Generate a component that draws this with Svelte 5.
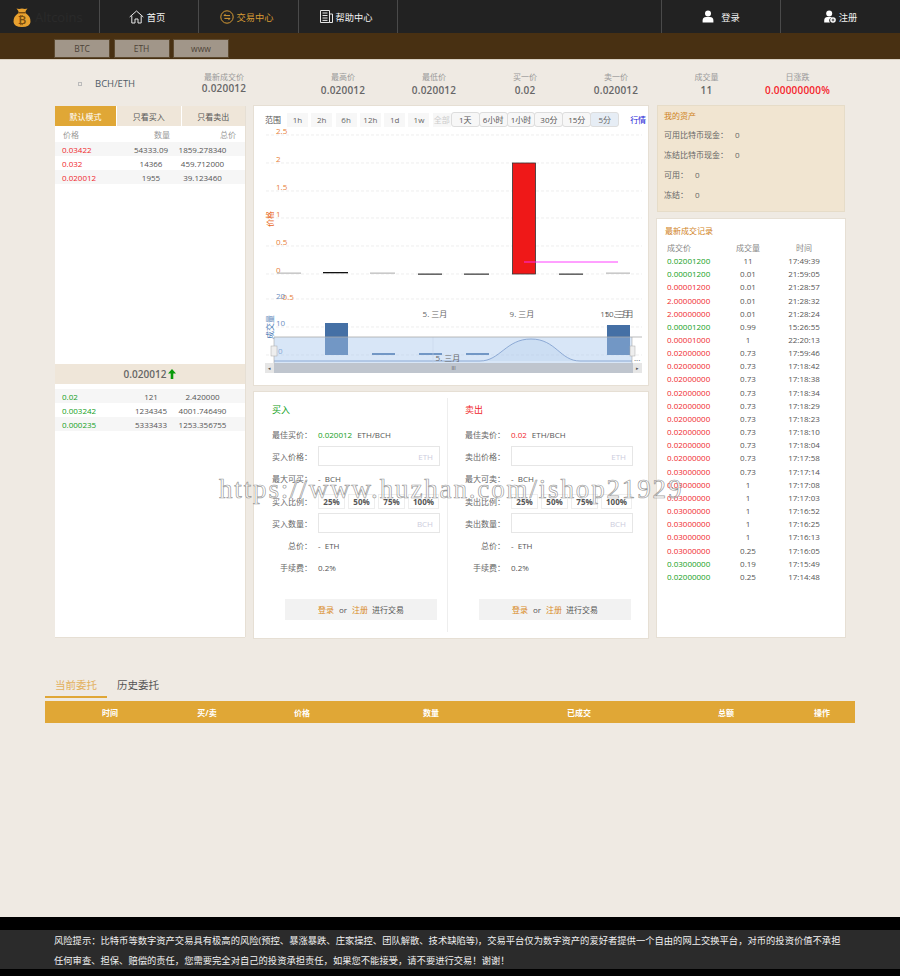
<script lang="ts">
  const nav = [
    { label: '首页', icon: 'home', active: false },
    { label: '交易中心', icon: 'swap', active: true },
    { label: '帮助中心', icon: 'doc', active: false }
  ];
  const stats = [
    { label: '最高价', value: '0.020012', w: 91 },
    { label: '最低价', value: '0.020012', w: 91 },
    { label: '买一价', value: '0.02', w: 91 },
    { label: '卖一价', value: '0.020012', w: 91 },
    { label: '成交量', value: '11', w: 90 }
  ];
  const asks = [
    ['0.03422', '54333.09', '1859.278340'],
    ['0.032', '14366', '459.712000'],
    ['0.020012', '1955', '39.123460']
  ];
  const bids = [
    ['0.02', '121', '2.420000'],
    ['0.003242', '1234345', '4001.746490'],
    ['0.000235', '5333433', '1253.356755']
  ];
  const trades = [
    ['0.02001200', '11', '17:49:39', 'g'],
    ['0.00001200', '0.01', '21:59:05', 'g'],
    ['0.00001200', '0.01', '21:28:57', 'r'],
    ['2.00000000', '0.01', '21:28:32', 'r'],
    ['2.00000000', '0.01', '21:28:24', 'r'],
    ['0.00001200', '0.99', '15:26:55', 'g'],
    ['0.00001000', '1', '22:20:13', 'r'],
    ['0.02000000', '0.73', '17:59:46', 'r'],
    ['0.02000000', '0.73', '17:18:42', 'r'],
    ['0.02000000', '0.73', '17:18:38', 'r'],
    ['0.02000000', '0.73', '17:18:34', 'r'],
    ['0.02000000', '0.73', '17:18:29', 'r'],
    ['0.02000000', '0.73', '17:18:23', 'r'],
    ['0.02000000', '0.73', '17:18:10', 'r'],
    ['0.02000000', '0.73', '17:18:04', 'r'],
    ['0.02000000', '0.73', '17:17:58', 'r'],
    ['0.03000000', '0.73', '17:17:14', 'r'],
    ['0.03000000', '1', '17:17:08', 'r'],
    ['0.03000000', '1', '17:17:03', 'r'],
    ['0.03000000', '1', '17:16:52', 'r'],
    ['0.03000000', '1', '17:16:25', 'r'],
    ['0.03000000', '1', '17:16:13', 'r'],
    ['0.03000000', '0.25', '17:16:05', 'r'],
    ['0.03000000', '0.19', '17:15:49', 'g'],
    ['0.02000000', '0.25', '17:14:48', 'g']
  ];
  const ranges = ['1h', '2h', '6h', '12h', '1d', '1w'];
  const periods = ['1天', '6小时', '1小时', '30分', '15分', '5分'];
  const grid = [29, 57, 85, 112, 140, 168, 193, 221, 249];
  const yTicks = [
    { t: '2.5', x: 22, y: 28 },
    { t: '2', x: 22, y: 56 },
    { t: '1.5', x: 22, y: 84 },
    { t: '1', x: 22, y: 111 },
    { t: '0.5', x: 22, y: 139 },
    { t: '0', x: 22, y: 167 },
    { t: '-0.5', x: 26, y: 194 }
  ];
  const minis = [
    { x: 23, w: 24, y: 166.5, c: '#bdbdbd' },
    { x: 69, w: 25, y: 166, c: '#111' },
    { x: 116, w: 25, y: 166.5, c: '#bdbdbd' },
    { x: 164, w: 24, y: 167.5, c: '#444' },
    { x: 210, w: 25, y: 167.5, c: '#444' },
    { x: 305, w: 24, y: 167.5, c: '#444' },
    { x: 352, w: 24, y: 166.5, c: '#bdbdbd' }
  ];
  const volumes = [
    { x: 71, y: 217 },
    { x: 118, y: 247 },
    { x: 165, y: 247 },
    { x: 212, y: 247 },
    { x: 353, y: 219 }
  ];
  const forms = [
    { title: '买入', tone: 'g', best: '最佳买价', bestVal: '0.020012', price: '买入价格', max: '最大可买', ratio: '买入比例', qty: '买入数量' },
    { title: '卖出', tone: 'r', best: '最佳卖价', bestVal: '0.02', price: '卖出价格', max: '最大可卖', ratio: '卖出比例', qty: '卖出数量' }
  ];
  const heads = [
    { t: '时间', w: 130 },
    { t: '买/卖', w: 64 },
    { t: '价格', w: 126 },
    { t: '数量', w: 132 },
    { t: '已成交', w: 164 },
    { t: '总额', w: 130 },
    { t: '操作', w: 62 }
  ];
</script>

<div class="page">
  <header class="top">
    <div class="logo">
      <svg width="22" height="22" viewBox="0 0 22 22">
        <path d="M7 3.5 L5.5 1.5 Q8 2.4 11 1.5 Q14 2.4 16.5 1.5 L15 3.5 Q14 5 14.5 6 Q20 9.5 19.5 15 Q19 20 11 20 Q3 20 2.5 15 Q2 9.5 7.5 6 Q8 5 7 3.5 Z" fill="#e8a12f" />
        <rect x="7.5" y="5" width="7" height="1.4" fill="#7a4d10" />
        <text x="11" y="16.5" text-anchor="middle" class="logo-b">₿</text>
      </svg>
      <span>Altcoins</span>
    </div>
    {#each nav as n}
      <a class="nav" class:active={n.active} href="#top">
        {#if n.icon === 'home'}
          <svg width="15" height="14" viewBox="0 0 15 14" fill="none" stroke="#e6e6e6" stroke-width="1">
            <path d="M0.7 7 L7.5 1 L14.3 7 M2.8 5.6 V13 H6 V9 H9 V13 H12.2 V5.6" />
          </svg>
        {:else if n.icon === 'swap'}
          <svg width="14" height="14" viewBox="0 0 14 14" fill="none" stroke="#d69a34" stroke-width="1">
            <circle cx="7" cy="7" r="6.2" />
            <path d="M4 5.6 H10 M5.6 3.9 L4 5.6 M10 8.4 H4.4 M8.4 10.1 L10 8.4" />
          </svg>
        {:else}
          <svg width="13" height="13" viewBox="0 0 13 13" fill="none" stroke="#e6e6e6" stroke-width="1">
            <path d="M0.5 0.5 H9.5 V12.5 H0.5 Z M9.5 4 H12.5 V12.5 H9.5 M2.5 3 H7.5 M2.5 5.5 H7.5 M2.5 8 H7.5 M2.5 10.4 H7.5" />
          </svg>
        {/if}
        <span>{n.label}</span>
      </a>
    {/each}
    <div class="top-gap"></div>
    <a class="nav auth" href="#top">
      <svg width="12" height="13" viewBox="0 0 12 13" fill="#fff">
        <circle cx="6" cy="3.4" r="3" />
        <path d="M0.6 12.6 V10.4 Q0.6 7.4 4 7 H8 Q11.4 7.4 11.4 10.4 V12.6 Z" />
      </svg>
      <span>登录</span>
    </a>
    <a class="nav auth last" href="#top">
      <svg width="12" height="13" viewBox="0 0 12 13" fill="#fff">
        <circle cx="5.2" cy="3.4" r="3" />
        <path d="M0.2 12.6 V10.4 Q0.2 7.4 3.4 7 H7 Q7.8 7.1 8.4 7.5 A3 3 0 0 0 6 12.6 Z" />
        <circle cx="9" cy="10" r="2.8" />
        <path d="M7.6 10 H10.4 M9 8.6 V11.4" stroke="#222" stroke-width="0.8" />
      </svg>
      <span>注册</span>
    </a>
  </header>

  <div class="market-bar">
    <button>BTC</button>
    <button>ETH</button>
    <button>www</button>
  </div>

  <section class="ticker">
    <div class="pair"><i></i><span>BCH/ETH</span></div>
    <div class="stat first">
      <small>最新成交价</small>
      <b>0.020012</b>
    </div>
    {#each stats as s}
      <div class="stat" style="width: {s.w}px">
        <small>{s.label}</small>
        <b>{s.value}</b>
      </div>
    {/each}
    <div class="stat change">
      <small>日涨跌</small>
      <b>0.00000000%</b>
    </div>
  </section>

  <main class="board">
    <aside class="book card">
      <div class="book-tabs">
        <span class="on">默认模式</span>
        <span>只看买入</span>
        <span>只看卖出</span>
      </div>
      <div class="book-head book-row">
        <span>价格</span><span>数量</span><span>总价</span>
      </div>
      <div class="book-list">
        {#each asks as r}
          <div class="book-row data">
            <span class="r">{r[0]}</span><span>{r[1]}</span><span>{r[2]}</span>
          </div>
        {/each}
      </div>
      <div class="last-price">
        <b>0.020012</b>
        <svg width="8" height="10" viewBox="0 0 8 10"><path d="M4 0 L8 4.4 H5.3 V10 H2.7 V4.4 H0 Z" fill="#0a9a0a" /></svg>
      </div>
      <div class="book-list bids">
        {#each bids as r}
          <div class="book-row data">
            <span class="g">{r[0]}</span><span>{r[1]}</span><span>{r[2]}</span>
          </div>
        {/each}
      </div>
    </aside>

    <div class="middle">
      <section class="chart card">
        <div class="chart-bar">
          <span class="range-label">范围</span>
          {#each ranges as r}
            <span class="range">{r}</span>
          {/each}
          <span class="range off">全部</span>
          <div class="periods">
            {#each periods as p, i}
              <span class="period" class:sel={i === periods.length - 1}>{p}</span>
            {/each}
          </div>
          <span class="quote">行情</span>
        </div>
        <svg class="plot" width="394" height="236" viewBox="0 21 394 236">
          {#each grid as y}
            <line x1="12" x2="388" y1={y} y2={y} class="grid" />
          {/each}
          {#each yTicks as t}
            <text x={t.x} y={t.y} class="ytick">{t.t}</text>
          {/each}
          <text transform="translate(19 113) rotate(-90)" text-anchor="middle" class="yname">价格</text>

          {#each minis as m}
            <rect x={m.x} y={m.y} width={m.w} height="1.3" fill={m.c} />
          {/each}
          <rect x="258.5" y="57" width="23" height="111" fill="#ef1818" stroke="#333" stroke-width="0.8" />
          <line x1="270" x2="364" y1="156" y2="156" stroke="#ff2bff" stroke-width="0.9" />

          <text x="22" y="193" class="vtick">20</text>
          <text x="22" y="220" class="vtick">10</text>
          <text x="24" y="248" class="vtick">0</text>
          <text transform="translate(19 221) rotate(-90)" text-anchor="middle" class="vname">成交量</text>
          <text x="181" y="211" text-anchor="middle" class="xtick">5. 三月</text>
          <text x="268" y="211" text-anchor="middle" class="xtick">9. 三月</text>
          <text x="361" y="211" text-anchor="middle" class="xtick">15. 三月</text>
          <text x="365" y="211" text-anchor="middle" class="xtick">10. 三月</text>

          {#each volumes as v}
            <rect x={v.x} y={v.y} width="23" height={249 - v.y} fill="#4570a5" />
          {/each}

          <rect x="20" y="231" width="358" height="26" fill="#a9c8ee" fill-opacity="0.45" />
          <path d="M20 255 H226 C246 255 252 233 277 233 C302 233 306 255 326 255 H378" fill="#9fc0e8" fill-opacity="0.2" stroke="#7a9bcb" stroke-width="0.8" />
          <line x1="179" x2="179" y1="231" y2="257" stroke="#c5d3e4" stroke-width="0.5" />
          <line x1="20" x2="388" y1="231" y2="231" stroke="#aaa" stroke-width="0.8" />
          <line x1="20" x2="20" y1="231" y2="257" stroke="#aaa" stroke-width="0.6" />
          <line x1="378" x2="378" y1="231" y2="257" stroke="#aaa" stroke-width="0.6" />
          <rect x="17" y="240" width="6" height="10" fill="#eee" stroke="#aaa" stroke-width="0.5" />
          <rect x="376" y="240" width="5" height="10" fill="#eee" stroke="#aaa" stroke-width="0.5" />
          <text x="194" y="255" text-anchor="middle" class="xtick">5. 三月</text>
          <text x="380" y="255" class="xtick">...</text>
        </svg>
        <div class="scroller">
          <span class="sc-btn">◂</span>
          <span class="sc-thumb">III</span>
          <span class="sc-btn">▸</span>
        </div>
      </section>

      <section class="trade card">
        {#each forms as f, i}
          <div class="form" class:second={i === 1}>
            <h3 class={f.tone}>{f.title}</h3>
            <div class="f-row">
              <label>{f.best}：</label>
              <span class="val"><em class={f.tone}>{f.bestVal}</em>ETH/BCH</span>
            </div>
            <div class="f-row">
              <label>{f.price}：</label>
              <div class="input">ETH</div>
            </div>
            <div class="f-row">
              <label>{f.max}：</label>
              <span class="val">-&nbsp; BCH</span>
            </div>
            <div class="f-row">
              <label>{f.ratio}：</label>
              <div class="ratios">
                <span>25%</span><span>50%</span><span>75%</span><span class="wide">100%</span>
              </div>
            </div>
            <div class="f-row">
              <label>{f.qty}：</label>
              <div class="input">BCH</div>
            </div>
            <div class="f-row">
              <label>总价：</label>
              <span class="val">-&nbsp; ETH</span>
            </div>
            <div class="f-row">
              <label>手续费：</label>
              <span class="val">0.2%</span>
            </div>
            <div class="login-box">
              <a href="#top">登录</a><i>or</i><a href="#top">注册</a><span>进行交易</span>
            </div>
          </div>
        {/each}
      </section>
    </div>

    <aside class="side">
      <section class="assets">
        <h4>我的资产</h4>
        <p>可用比特币现金： <span>0</span></p>
        <p>冻结比特币现金： <span>0</span></p>
        <p>可用： <span>0</span></p>
        <p>冻结： <span>0</span></p>
      </section>
      <section class="deals card">
        <h4>最新成交记录</h4>
        <div class="deal-row head">
          <span>成交价</span><span>成交量</span><span>时间</span>
        </div>
        {#each trades as t}
          <div class="deal-row">
            <span class={t[3]}>{t[0]}</span><span>{t[1]}</span><span>{t[2]}</span>
          </div>
        {/each}
      </section>
    </aside>
  </main>

  <section class="orders">
    <div class="order-tabs">
      <span class="on">当前委托</span>
      <span>历史委托</span>
    </div>
    <div class="order-head">
      {#each heads as h}
        <span style="width: {h.w}px">{h.t}</span>
      {/each}
    </div>
  </section>

  <footer class="foot">
    <p>风险提示：比特币等数字资产交易具有极高的风险(预控、暴涨暴跌、庄家操控、团队解散、技术缺陷等)，交易平台仅为数字资产的爱好者提供一个自由的网上交换平台，对币的投资价值不承担任何审查、担保、赔偿的责任，您需要完全对自己的投资承担责任，如果您不能接受，请不要进行交易！谢谢！</p>
  </footer>

  <div class="watermark">https://www.huzhan.com/ishop21929</div>
</div>

<style>
  :global(body) {
    margin: 0;
    background: #efeae3;
  }
  .page {
    position: relative;
    width: 900px;
    height: 976px;
    display: flex;
    flex-direction: column;
    overflow: hidden;
    background: #efeae3;
    color: #555;
    font-family: 'Open Sans', 'Noto Sans CJK SC', sans-serif;
    font-size: 8px;
  }
  a {
    color: inherit;
    text-decoration: none;
  }
  .card {
    background: #fff;
    box-shadow: 0 0 0 1px #e6dfd4;
  }
  .r { color: #f0282d; }
  .g { color: #12a022; }

  /* шапка */
  .top {
    display: flex;
    height: 33px;
    background: #222;
  }
  .logo {
    width: 99px;
    padding: 7px 0 0 11px;
    box-sizing: border-box;
    display: flex;
    gap: 2px;
    color: #2a2a2a;
    font-size: 13px;
    line-height: 20px;
  }
  .logo-b {
    font-size: 10px;
    font-weight: 700;
    fill: #7a4d10;
  }
  .nav {
    width: 99px;
    display: flex;
    align-items: center;
    justify-content: center;
    gap: 3px;
    border-left: 1px solid #4a4a4a;
    box-sizing: border-box;
    color: #f2f2f2;
    font-size: 9.25px;
    padding-right: 4px;
  }
  .nav.active {
    width: 100px;
    color: #d69a34;
  }
  .top-gap {
    flex: 1;
    border-left: 1px solid #4a4a4a;
  }
  .nav.auth {
    width: 119px;
    gap: 7px;
    padding-right: 0;
  }
  .nav.auth.last {
    width: 120px;
    gap: 3px;
  }
  .market-bar {
    height: 27px;
    background: #483012;
    display: flex;
    gap: 3.5px;
    padding: 6px 0 0 54px;
    box-sizing: border-box;
    border-bottom: 1px solid #d9d0c1;
  }
  .market-bar button {
    width: 56px;
    height: 19px;
    padding: 0;
    background: #a19689;
    border: 1px solid #5d4a30;
    color: #4d4338;
    font: inherit;
    font-size: 8.5px;
  }

  /* строка котировок */
  .ticker {
    height: 45px;
    display: flex;
    align-items: flex-start;
    padding-left: 78px;
    box-sizing: border-box;
  }
  .pair {
    width: 103px;
    display: flex;
    align-items: center;
    gap: 13px;
    padding-top: 17px;
    color: #4f5b66;
    font-size: 9.5px;
  }
  .pair i {
    width: 2px;
    height: 2px;
    border: 1px solid #bbb;
  }
  .stat {
    display: flex;
    flex-direction: column;
    align-items: center;
    gap: 1px;
    padding-top: 11px;
  }
  .stat small {
    font-size: 8px;
    line-height: 11px;
    color: #999;
  }
  .stat b {
    font-size: 10px;
    line-height: 14px;
    font-weight: 600;
    color: #666;
    letter-spacing: 0.2px;
  }
  .stat.first {
    width: 86px;
    margin-right: 30.5px;
  }
  .stat.first b {
    margin-top: -2px;
  }
  .stat.change {
    width: 90px;
    margin-left: 1px;
  }
  .stat.change b {
    color: #f5242b;
  }

  /* основная сетка */
  .board {
    display: flex;
    align-items: flex-start;
    height: 534px;
    padding-left: 55px;
    gap: 9px;
  }

  /* стакан */
  .book {
    width: 190px;
    height: 531px;
    margin-top: 1px;
    display: flex;
    flex-direction: column;
    box-shadow: 1px 0 0 #e6dfd4, 0 1px 0 #e6dfd4;
  }
  .book-tabs {
    display: flex;
    gap: 1px;
    height: 20px;
    flex: none;
  }
  .book-tabs span {
    flex: 1;
    display: flex;
    align-items: center;
    justify-content: center;
    background: #efe6d9;
    color: #555;
  }
  .book-tabs span.on {
    flex: 0 0 61px;
    background: #e0a736;
    color: #fff;
  }
  .book-row {
    display: grid;
    grid-template-columns: 62px 54px 1fr;
    padding: 0 7px;
    height: 14px;
    align-items: center;
  }
  .book-row span:nth-child(2) {
    text-align: center;
  }
  .book-row span:nth-child(3) {
    text-align: center;
    padding-right: 11px;
  }
  .book-head {
    height: 16px;
    color: #999;
    flex: none;
  }
  .book-head span:first-child {
    padding-left: 1px;
  }
  .book-head span:nth-child(2) {
    text-align: right;
    padding-right: 8px;
  }
  .book-head span:nth-child(3) {
    text-align: right;
    padding-right: 2px;
  }
  .book-list {
    height: 222px;
    flex: none;
    box-sizing: border-box;
  }
  .book-list.bids {
    padding-top: 5px;
    height: auto;
  }
  .data:nth-child(odd) {
    background: #f6f6f6;
  }
  .last-price {
    height: 20px;
    flex: none;
    display: flex;
    align-items: center;
    justify-content: center;
    gap: 2px;
    background: #efe6d9;
  }
  .last-price b {
    font-size: 10px;
    font-weight: 600;
    color: #666;
  }

  /* график */
  .middle {
    width: 394px;
    display: flex;
    flex-direction: column;
    gap: 7px;
    margin-top: 1px;
  }
  .chart {
    height: 279px;
    box-sizing: border-box;
    padding-top: 6px;
  }
  .chart-bar {
    display: flex;
    align-items: center;
    height: 15px;
    margin-left: 11px;
    white-space: nowrap;
  }
  .range-label {
    width: 22px;
    color: #555;
  }
  .range {
    width: 21px;
    height: 14px;
    margin-right: 3.3px;
    display: flex;
    align-items: center;
    justify-content: center;
    background: #f7f7f7;
    color: #666;
  }
  .range.off {
    width: 18px;
    margin-right: 0;
    color: #ccc;
  }
  .periods {
    display: flex;
  }
  .period {
    width: 26.9px;
    height: 13px;
    display: flex;
    align-items: center;
    justify-content: center;
    background: #f7f7f7;
    border: 1px solid #ddd;
    border-radius: 3px;
    color: #555;
    margin-right: -1px;
  }
  .period.sel {
    background: #e6edf5;
    color: #666;
  }
  .quote {
    margin-left: 12px;
    color: #1a1ad6;
  }
  .plot {
    display: block;
    overflow: visible;
  }
  .grid {
    stroke: #e6e6e6;
    stroke-width: 0.7;
    stroke-dasharray: 3 2;
  }
  .ytick {
    font-size: 8px;
    fill: #e8803a;
  }
  .vtick {
    font-size: 8px;
    fill: #6d8fbf;
  }
  .yname {
    font-size: 8px;
    fill: #e8661a;
  }
  .vname {
    font-size: 8px;
    fill: #4f7eb8;
  }
  .xtick {
    font-size: 8px;
    fill: #666;
  }
  .scroller {
    margin: 0 6px 0 11px;
    height: 10px;
    display: flex;
    background: #bfc5ce;
    font-size: 5px;
    color: #555;
  }
  .sc-btn {
    width: 9px;
    display: flex;
    align-items: center;
    justify-content: center;
    background: #e6e6e6;
  }
  .sc-thumb {
    flex: 1;
    display: flex;
    align-items: center;
    justify-content: center;
  }

  /* формы покупки и продажи */
  .trade {
    height: 246px;
    display: flex;
    padding: 6px 0;
    box-sizing: border-box;
  }
  .form {
    width: 193px;
    box-sizing: border-box;
    padding-left: 18px;
    position: relative;
  }
  .form.second {
    width: 201px;
    border-left: 1px solid #eee;
    padding-left: 17px;
  }
  .form h3 {
    margin: 0;
    padding-top: 5px;
    height: 25px;
    box-sizing: border-box;
    line-height: 14px;
    font-size: 9px;
    font-weight: 400;
  }
  .f-row {
    display: flex;
    align-items: center;
    height: 22.3px;
    color: #555;
  }
  .f-row label {
    width: 46px;
    flex: none;
    box-sizing: border-box;
    padding-right: 6px;
    text-align: right;
    white-space: nowrap;
    color: #666;
  }
  .val {
    color: #555;
  }
  .val em {
    font-style: normal;
    margin-right: 5px;
  }
  .input {
    width: 122px;
    height: 20px;
    box-sizing: border-box;
    border: 1px solid #e6e6e6;
    display: flex;
    align-items: center;
    justify-content: flex-end;
    padding-right: 6px;
    color: #ccd;
  }
  .ratios {
    display: flex;
    gap: 3px;
  }
  .ratios span {
    width: 27px;
    height: 15px;
    display: flex;
    align-items: center;
    justify-content: center;
    box-sizing: border-box;
    border: 1px solid #eee;
    font-weight: 700;
  }
  .ratios span.wide {
    width: 31px;
  }
  .login-box {
    position: absolute;
    left: 31px;
    width: 152px;
    top: 201px;
    height: 21px;
    background: #f2f2f2;
    display: flex;
    align-items: center;
    justify-content: center;
    gap: 4px;
  }
  .login-box a {
    color: #d98a1f;
  }
  .login-box i {
    font-style: normal;
    margin: 0 1px;
  }

  /* правая колонка */
  .side {
    width: 188px;
    display: flex;
    flex-direction: column;
    gap: 7px;
  }
  .assets {
    height: 107px;
    box-sizing: border-box;
    padding: 4px 6px;
    background: #f1e5d1;
    border: 1px solid #e6dcc8;
  }
  .assets h4,
  .deals h4 {
    margin: 0;
    font-size: 8px;
    line-height: 11px;
    font-weight: 400;
    color: #d0821c;
  }
  .assets p {
    margin: 0;
    height: 20px;
    line-height: 20px;
    color: #666;
  }
  .assets h4 {
    margin-bottom: 4px;
  }
  .assets p span {
    margin-left: 5px;
  }
  .deals {
    height: 418px;
    padding: 6px 8px 0;
    box-sizing: border-box;
  }
  .deals h4 {
    margin-bottom: 4px;
  }
  .deal-row {
    display: grid;
    grid-template-columns: 1fr 56px 56px;
    height: 13.17px;
    align-items: center;
    padding-left: 2px;
    padding-right: 5px;
    color: #555;
  }
  .deal-row span:not(:first-child) {
    text-align: center;
  }
  .deal-row.head {
    color: #888;
    height: 14px;
  }

  /* заявки */
  .orders {
    padding: 0 45px;
    margin-top: 31px;
  }
  .order-tabs {
    display: flex;
    height: 28px;
    font-size: 10.5px;
  }
  .order-tabs span {
    width: 62px;
    height: 28px;
    padding-top: 3px;
    text-align: center;
    line-height: 25px;
    box-sizing: border-box;
    color: #555;
  }
  .order-tabs span.on {
    color: #e3b05c;
    border-bottom: 2px solid #e0a736;
  }
  .order-head {
    margin-top: 3px;
    height: 22px;
    background: #e0a736;
    display: flex;
    align-items: center;
    color: #fff;
    font-weight: 700;
  }
  .order-head span {
    text-align: center;
    flex: none;
  }

  /* подвал */
  .foot {
    position: absolute;
    left: 0;
    right: 0;
    bottom: 0;
    height: 59px;
    background: #000;
    padding: 13px 0 7px;
    box-sizing: border-box;
  }
  .foot p {
    margin: 0;
    height: 39px;
    padding: 1px 55px 0 54px;
    background: #2b2b2b;
    color: #f0f0f0;
    font-size: 9.3px;
    line-height: 20px;
    box-sizing: border-box;
  }

  /* водяной знак поверх страницы */
  .watermark {
    position: absolute;
    left: 219px;
    top: 474px;
    font-family: 'Liberation Serif', serif;
    font-size: 27px;
    letter-spacing: 1.85px;
    color: rgba(255, 255, 255, 0.5);
    -webkit-text-stroke: 0.7px rgba(120, 120, 120, 0.75);
    white-space: nowrap;
    pointer-events: none;
  }
</style>
